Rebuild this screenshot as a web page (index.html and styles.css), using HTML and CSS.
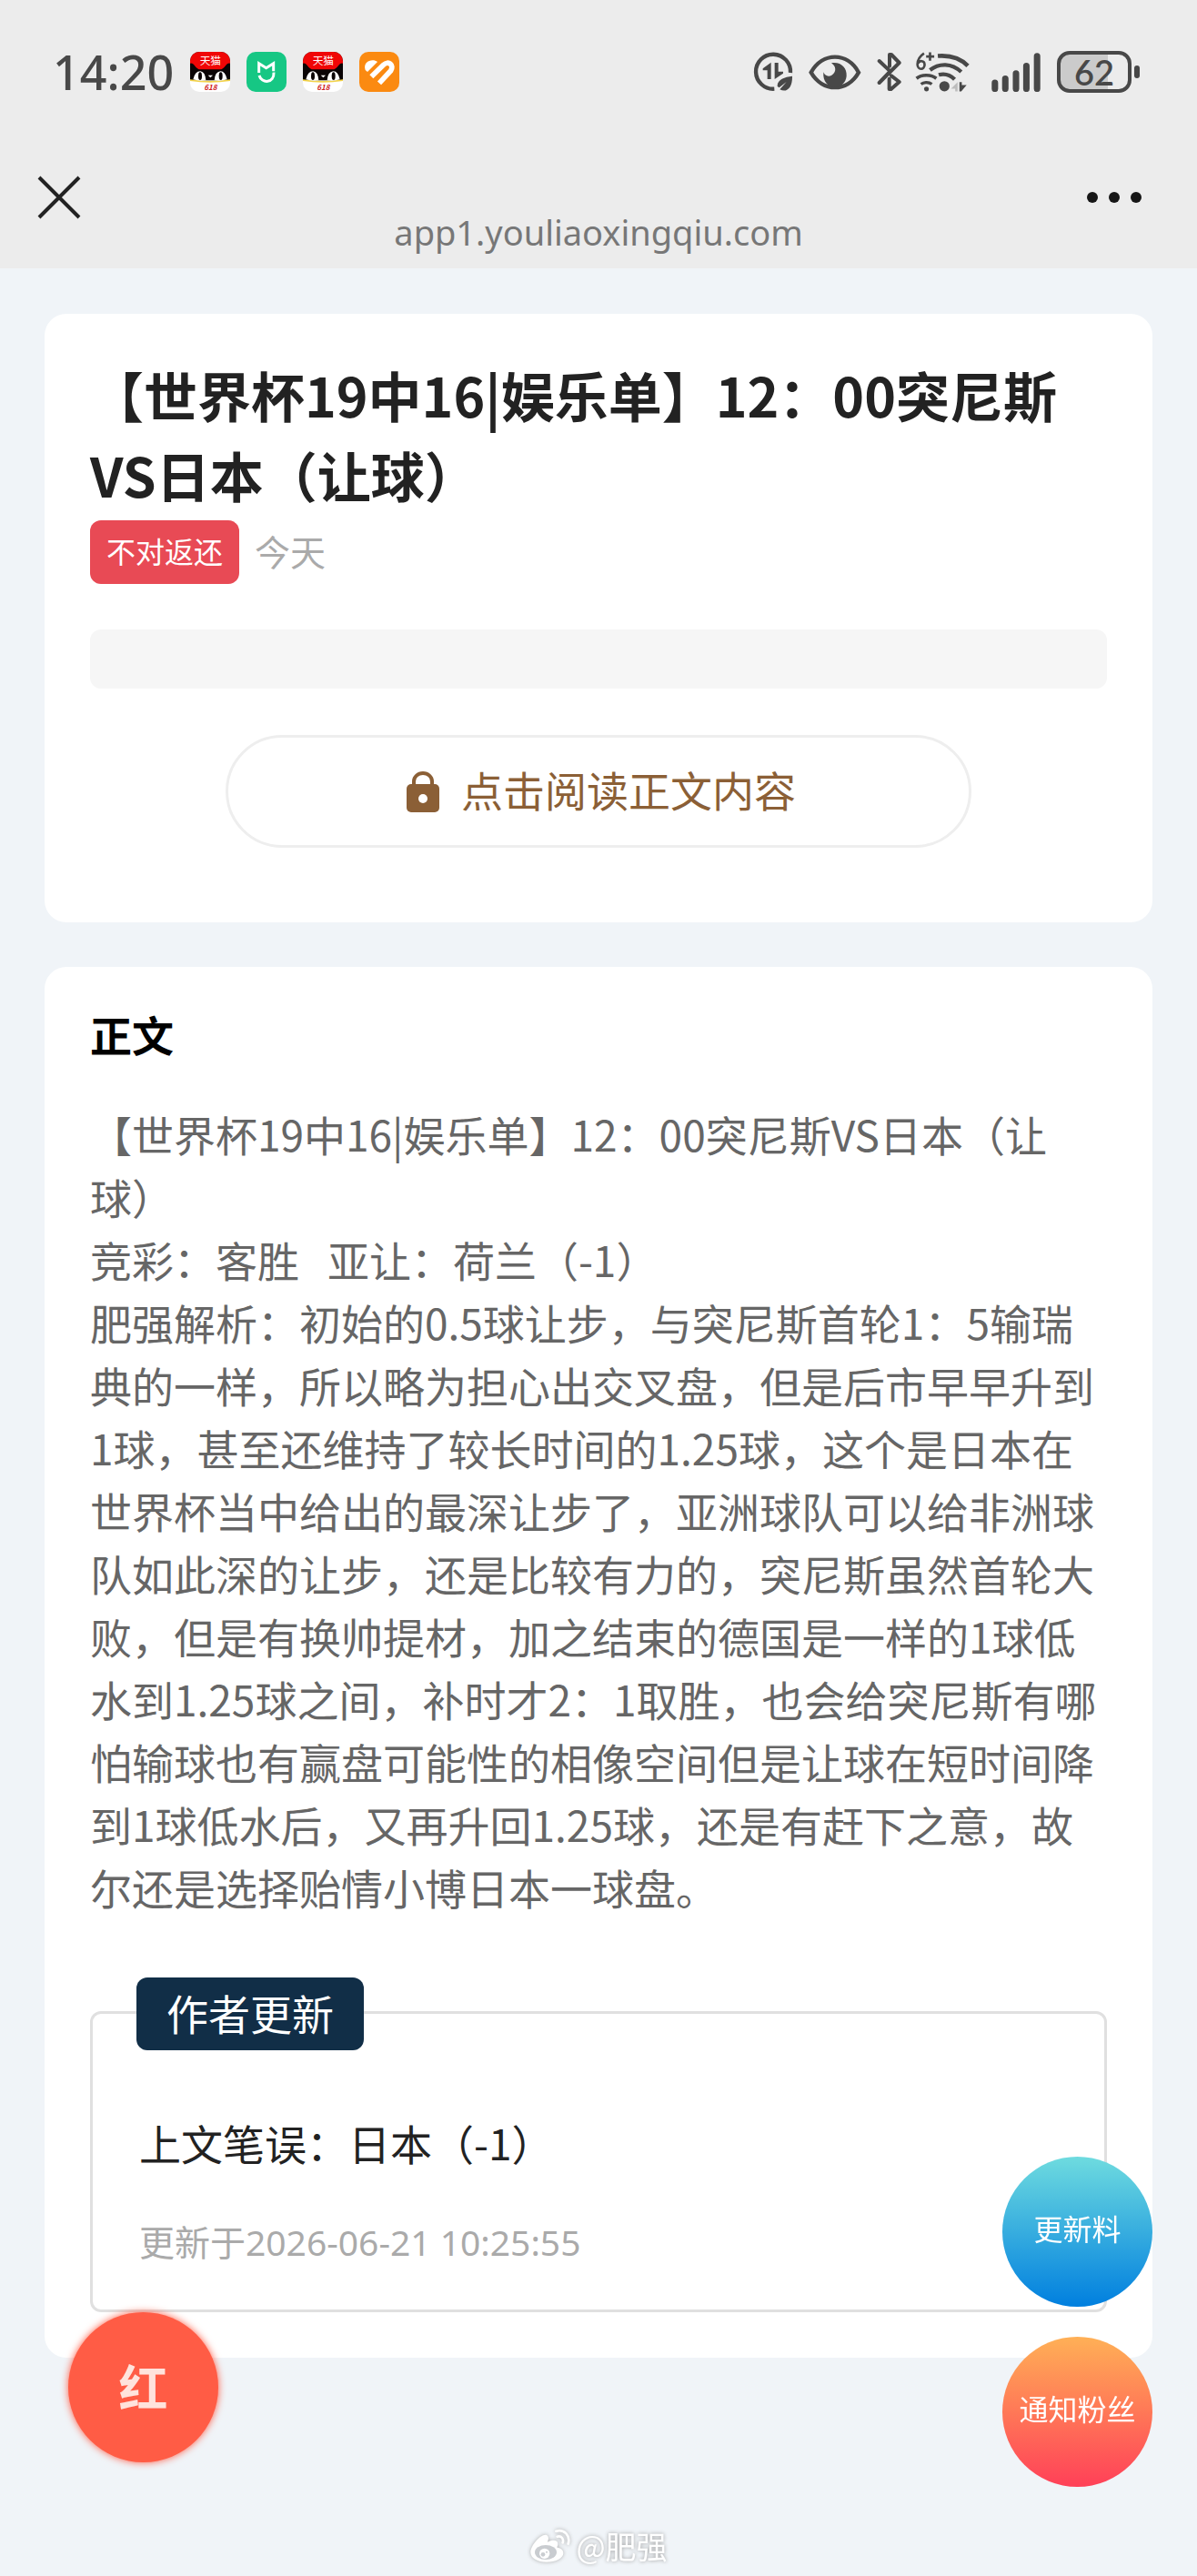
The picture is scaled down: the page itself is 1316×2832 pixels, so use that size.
FILE: index.html
```
<!DOCTYPE html>
<html lang="zh-CN">
<head>
  <meta charset="UTF-8" />
  <meta name="viewport" content="width=device-width, initial-scale=1.0" />
  <title>世界杯</title>
  <link rel="stylesheet" href="styles.css">
</head>
<body>
  <header class="top">
    <div class="status">
      <div class="status-left">
        <span class="time">14:20</span>
        <svg class="app tmall" viewBox="0 0 132 132">
          <rect width="132" height="132" fill="#fff" />
          <rect width="132" height="94" fill="#0a0405" />
          <path d="M0 0H132V38Q124 36 118 44Q108 58 98 58H34Q24 58 14 44Q8 36 0 38Z" fill="#f00606" />
          <path d="M0 91Q66 101 132 91V96Q66 106 0 96Z" fill="#f3d34a" />
          <path d="M10 91Q16 64 34 64Q50 66 52 94Q30 98 10 91ZM80 94Q82 66 100 64Q116 64 122 91Q102 98 80 94Z" fill="#fff" />
          <ellipse cx="33" cy="80" rx="6" ry="13" fill="#0a0405" />
          <ellipse cx="101" cy="80" rx="6" ry="13" fill="#0a0405" />
          <path d="M59 77H75L67 85Z" fill="#fff" />
          <text x="67" y="43" class="tmall-name">天猫</text>
          <text x="67" y="126" class="tmall-sale">618</text>
        </svg>
        <svg class="app" viewBox="0 0 132 132">
          <rect width="132" height="132" rx="30" fill="#16c784" />
          <path d="M41 69V38L65 53L89 38V64" fill="none" stroke="#fff" stroke-width="9" />
          <path d="M90 68C92 104 50 106 42 78" fill="none" stroke="#fff" stroke-width="9" />
        </svg>
        <svg class="app tmall" viewBox="0 0 132 132">
          <rect width="132" height="132" fill="#fff" />
          <rect width="132" height="94" fill="#0a0405" />
          <path d="M0 0H132V38Q124 36 118 44Q108 58 98 58H34Q24 58 14 44Q8 36 0 38Z" fill="#f00606" />
          <path d="M0 91Q66 101 132 91V96Q66 106 0 96Z" fill="#f3d34a" />
          <path d="M10 91Q16 64 34 64Q50 66 52 94Q30 98 10 91ZM80 94Q82 66 100 64Q116 64 122 91Q102 98 80 94Z" fill="#fff" />
          <ellipse cx="33" cy="80" rx="6" ry="13" fill="#0a0405" />
          <ellipse cx="101" cy="80" rx="6" ry="13" fill="#0a0405" />
          <path d="M59 77H75L67 85Z" fill="#fff" />
          <text x="67" y="43" class="tmall-name">天猫</text>
          <text x="67" y="126" class="tmall-sale">618</text>
        </svg>
        <svg class="app" viewBox="0 0 132 132">
          <rect width="132" height="132" rx="30" fill="#fb8a11" />
          <path d="M40 82L80 43C96 27 116 44 104 62L66 103" fill="none" stroke="#fff" stroke-width="17" />
          <path d="M20 60C10 32 44 20 60 33L27 66Z" fill="#fff" />
        </svg>
      </div>
      <div class="status-right">
        <svg class="saver" viewBox="86 82 132 130">
          <path d="M156 203A57 57 0 1 1 209 150" fill="none" stroke="#484848" stroke-width="13" />
          <path d="M145 171V116L118 136V142H133V171ZM157 117V171L185 152V146H169V117Z" fill="#484848" />
          <path d="M215 161C190 164 165 172 166 195L172 199L196 180L174 205C198 217 216 198 215 161Z" fill="#484848" />
        </svg>
        <svg class="eye" viewBox="270 86 172 120">
          <path d="M277 148C315 80 397 80 434 148C397 214 315 214 277 148Z" fill="none" stroke="#484848" stroke-width="13" />
          <path d="M344 117C375 112 396 132 394 160C392 182 375 196 355 196C333 196 315 178 318 147C323 160 335 163 345 157C362 147 360 127 344 117Z" fill="#484848" />
        </svg>
        <svg class="bt" viewBox="494 82 84 130">
          <path d="M502 111L538 145L502 183M536 128V90H542L568 117L502 183M542 160L568 180L541 204H535V170" fill="none" stroke="#484848" stroke-width="12" stroke-linecap="round" stroke-linejoin="round" />
        </svg>
        <svg class="wifi" viewBox="620 74 182 136">
          <g fill="none" stroke="#484848">
            <path d="M650 80C632 92 628 106 628 117C628 137 652 137 652 118C652 103 634 103 630 114" stroke-width="8" />
            <path d="M657 91H684M670 77V105" stroke-width="8" />
            <path d="M696 89C735 86 770 95 796 122" stroke-width="14" />
            <path d="M670 136C700 112 742 112 774 142" stroke-width="13" />
            <path d="M699 152C720 146 737 152 752 167" stroke-width="13" />
            <path d="M625 164C642 150 674 150 691 164" stroke-width="11" />
            <path d="M640 183C650 175 666 175 676 183" stroke-width="10" />
          </g>
          <circle cx="658" cy="199" r="8" fill="#484848" />
          <circle cx="718" cy="190" r="17" fill="#484848" />
          <path d="M762 176V207H754V198H740Z" fill="#bdbdbd" />
          <path d="M768 176V207H774L792 186H776V176Z" fill="#484848" />
        </svg>
        <svg class="signal" viewBox="872 80 160 128">
          <path d="M883 178V198M917 165V198M952 148V198M986 123V198M1021 91V198" stroke="#484848" stroke-width="21" stroke-linecap="round" />
        </svg>
        <div class="battery"><span>62</span></div>
      </div>
    </div>
    <div class="nav">
      <button class="nav-btn" aria-label="关闭">
        <svg width="48" height="48" viewBox="0 0 48 48"><path d="M2 2L46 46M46 2L2 46" stroke="#222" stroke-width="4" /></svg>
      </button>
      <button class="nav-btn" aria-label="更多">
        <svg width="60" height="48" viewBox="0 0 60 48" fill="#161616"><circle cx="6" cy="24" r="6" /><circle cx="30" cy="24" r="6" /><circle cx="54" cy="24" r="6" /></svg>
      </button>
    </div>
    <div class="url">app1.youliaoxingqiu.com</div>
  </header>

  <main>
    <section class="card intro">
      <h1>【世界杯19中16|娱乐单】12：00突尼斯VS日本（让球）</h1>
      <div class="meta">
        <span class="tag">不对返还</span>
        <span class="date">今天</span>
      </div>
      <div class="placeholder"></div>
      <button class="read">
        <svg width="36" height="46" viewBox="0 0 36 46">
          <path d="M8 18V12A10 9 0 0 1 28 12V18" fill="none" stroke="#8b5f36" stroke-width="4" />
          <rect y="15" width="36" height="31" rx="5" fill="#8b5f36" />
          <circle cx="18" cy="31" r="5" fill="#fff" />
        </svg>
        <span>点击阅读正文内容</span>
      </button>
    </section>

    <section class="card article">
      <h2>正文</h2>
      <p class="text">【世界杯19中16|娱乐单】12：00突尼斯VS日本（让球）<br>竞彩：客胜&nbsp;&nbsp; 亚让：荷兰（-1）<br>肥强解析：初始的0.5球让步，与突尼斯首轮1：5输瑞典的一样，所以略为担心出交叉盘，但是后市早早升到1球，甚至还维持了较长时间的1.25球，这个是日本在世界杯当中给出的最深让步了，亚洲球队可以给非洲球队如此深的让步，还是比较有力的，突尼斯虽然首轮大败，但是有换帅提材，加之结束的德国是一样的1球低水到1.25球之间，补时才2：1取胜，也会给突尼斯有哪怕输球也有赢盘可能性的相像空间但是让球在短时间降到1球低水后，又再升回1.25球，还是有赶下之意，故尔还是选择贻情小博日本一球盘。</p>
      <div class="update">
        <h3>作者更新</h3>
        <p class="update-text">上文笔误：日本（-1）</p>
        <p class="update-time">更新于2026-06-21 10:25:55</p>
      </div>
    </section>
  </main>

  <button class="result">红</button>
  <div class="floats">
    <button class="float blue">更新料</button>
    <button class="float orange">通知粉丝</button>
  </div>

  <div class="watermark">
    <svg width="46" height="38" viewBox="0 0 138 114">
      <path d="M4 78C4 54 42 12 58 22C66 28 62 38 60 44C76 36 94 36 94 50C94 56 90 60 92 62C104 64 112 70 112 80C112 98 86 110 56 110C28 110 4 98 4 78Z" fill="#fff" />
      <ellipse cx="54" cy="78" rx="36" ry="24" fill="#c9ccd0" />
      <circle cx="50" cy="82" r="17" fill="#fff" />
      <circle cx="45" cy="85" r="7" fill="#c9ccd0" />
      <circle cx="57" cy="77" r="3" fill="#c9ccd0" />
      <path d="M88 8C116 0 136 24 128 50M92 26C106 22 114 34 110 46" fill="none" stroke="#fff" stroke-width="8" stroke-linecap="round" />
    </svg>
    @肥强
  </div>
</body>
</html>
```

FILE: styles.css
```
* {
  box-sizing: border-box;
}
body {
  margin: 0;
  min-height: 100vh;
  background: #f0f4f8;
  color: #222;
  font-family: "Noto Sans CJK SC", sans-serif;
}
h1, h2, h3, p {
  margin: 0;
}
button {
  font-family: inherit;
  border: none;
  padding: 0;
  cursor: pointer;
}
svg {
  display: block;
  flex: none;
}

/* top bars */
.top {
  background: #ececec;
  height: 295px;
  padding-top: 50px;
}
.status {
  display: flex;
  justify-content: space-between;
  align-items: center;
  height: 58px;
  padding: 0 72px 0 58px;
}
.status-left, .status-right {
  display: flex;
  align-items: center;
}
.status-left {
  gap: 18px;
}
.time {
  font-family: "Noto Sans", sans-serif;
  font-size: 52px;
  font-weight: 500;
  line-height: 58px;
  color: #484848;
}
.app {
  width: 44px;
  height: 44px;
}
.tmall {
  border-radius: 10px;
}
.tmall-name {
  font-size: 35px;
  fill: #fff;
  text-anchor: middle;
}
.tmall-sale {
  font-size: 24px;
  font-weight: bold;
  font-style: italic;
  fill: #d02020;
  text-anchor: middle;
}
.saver {
  width: 44px;
  height: 44px;
}
.eye {
  width: 58px;
  height: 40px;
  margin-left: 17px;
}
.bt {
  width: 28px;
  height: 44px;
  margin-left: 17px;
}
.wifi {
  width: 60px;
  height: 46px;
  margin-left: 14px;
}
.signal {
  width: 54px;
  height: 43px;
  margin-left: 24px;
}
.battery {
  position: relative;
  width: 82px;
  height: 46px;
  margin-left: 18px;
  border: 4px solid #484848;
  border-radius: 14px;
  background: linear-gradient(90deg, #cbcbcb 70%, #ececec 70%);
  text-align: center;
}
.battery span {
  display: block;
  font-family: Lato, sans-serif;
  font-size: 38px;
  font-weight: 600;
  line-height: 38px;
  color: #484848;
}
.battery::after {
  content: "";
  position: absolute;
  right: -13px;
  top: 12px;
  width: 6px;
  height: 14px;
  border-radius: 3px;
  background: #484848;
}
.nav {
  display: flex;
  justify-content: space-between;
  padding: 85px 61px 0 41px;
}
.nav-btn {
  height: 42px;
  background: none;
}
.url {
  font-family: "Noto Sans", sans-serif;
  font-size: 38px;
  line-height: 40px;
  color: #777;
  text-align: center;
}

/* cards */
main {
  padding: 50px 49px;
}
.card {
  background: #fff;
  border-radius: 24px;
  padding: 45px 50px 50px;
}
.intro {
  padding-bottom: 82px;
  margin-bottom: 49px;
}
h1 {
  font-size: 59px;
  line-height: 88px;
}
.meta {
  display: flex;
  align-items: center;
  gap: 17px;
  margin-top: 6px;
}
.tag {
  background: #e84a55;
  color: #fff;
  font-size: 32px;
  line-height: 66px;
  padding: 0 18px 4px;
  border-radius: 12px;
}
.date {
  font-size: 39px;
  line-height: 58px;
  padding-bottom: 4px;
  color: #aaa;
}
.placeholder {
  height: 65px;
  margin-top: 50px;
  border-radius: 12px;
  background: #f6f6f6;
}
.read {
  display: flex;
  justify-content: center;
  align-items: center;
  gap: 24px;
  width: 820px;
  max-width: 100%;
  height: 124px;
  margin: 51px auto 0;
  padding-left: 6px;
  border: 3px solid #eee;
  border-radius: 62px;
  background: #fff;
  color: #8b5f36;
  font-size: 46px;
}
.read span {
  padding-bottom: 6px;
}
h2 {
  font-size: 46px;
  line-height: 56px;
  color: #000;
}
.text {
  margin-top: 48px;
  font-size: 46px;
  line-height: 69px;
  color: #666;
}
.update {
  position: relative;
  margin-top: 102px;
  padding: 107px 51px 43px;
  border: 3px solid #e0e0e0;
  border-radius: 12px;
}
h3 {
  position: absolute;
  top: -40px;
  left: 48px;
  padding: 0 33px 4px;
  border-radius: 12px;
  background: #112e47;
  color: #fff;
  font-size: 46px;
  font-weight: normal;
  line-height: 76px;
}
.update-text {
  font-size: 46px;
  line-height: 69px;
}
.update-time {
  margin-top: 44px;
  font-family: "Noto Sans", "Noto Sans CJK SC", sans-serif;
  font-size: 39px;
  line-height: 62px;
  color: #aaa;
}

/* floating buttons */
.result {
  position: fixed;
  left: 75px;
  bottom: 125px;
  width: 165px;
  height: 165px;
  padding-bottom: 4px;
  border-radius: 50%;
  background: #ff5c45;
  box-shadow: 0 0 8px #ff5c45;
  color: #ffe3dc;
  font-size: 54px;
  font-weight: bold;
}
.floats {
  position: fixed;
  right: 49px;
  bottom: 98px;
  display: flex;
  flex-direction: column;
  gap: 33px;
}
.float {
  width: 165px;
  height: 165px;
  padding-bottom: 10px;
  border-radius: 50%;
  color: #fff;
  font-size: 32px;
}
.blue {
  background: linear-gradient(#6edbdf, #007fdf);
}
.orange {
  background: linear-gradient(#ffb056, #ff4058);
}
.watermark {
  position: fixed;
  left: 0;
  right: 0;
  bottom: 10px;
  display: flex;
  justify-content: center;
  align-items: center;
  gap: 5px;
  font-size: 34px;
  line-height: 46px;
  color: #fff;
  text-shadow: 0 0 4px #999;
}
.watermark svg {
  filter: drop-shadow(0 0 2px #aaa);
}
```
